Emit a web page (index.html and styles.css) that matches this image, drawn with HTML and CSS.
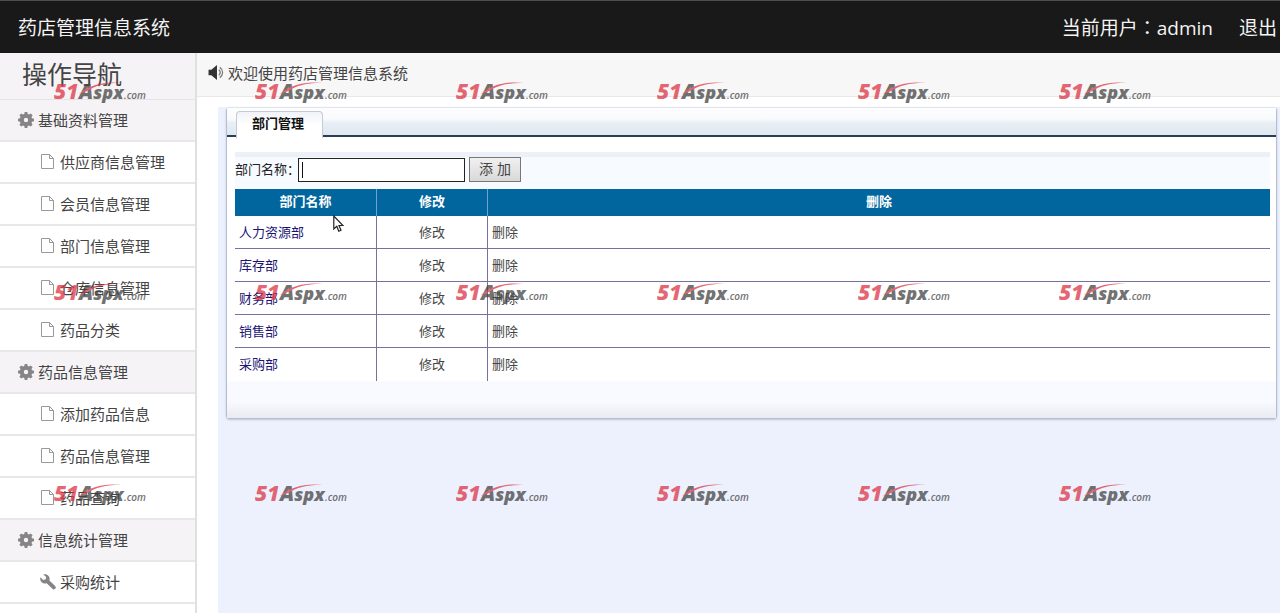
FILE: index.html
```html
<!DOCTYPE html>
<html lang="zh-CN">
<head>
<meta charset="utf-8">
<title>药店管理信息系统</title>
<link rel="stylesheet" href="styles.css">
</head>
<body>
<svg class="defs" aria-hidden="true">
  <symbol id="gear" viewBox="0 0 16 16"><path fill-rule="evenodd" d="M6.700 0h2.600l.4 2 1.300.5 1.700-1.100 1.900 1.900-1.100 1.700.5 1.300 2 .4v2.600l-2 .4-.5 1.300 1.100 1.700-1.900 1.900-1.700-1.100-1.300.5-.4 2H6.700l-.4-2-1.300-.5-1.700 1.100-1.900-1.900L2.500 11 2 9.700l-2-.4V6.700l2-.4L2.500 5 1.400 3.300l1.900-1.900L5 2.500 6.300 2zM8 5.800a2.200 2.200 0 1 0 0 4.400 2.200 2.200 0 0 0 0-4.400z"/></symbol>
  <symbol id="file" viewBox="0 0 16 16"><path d="M1.500.5h8l4 4v10h-12zM9.500.5v4h4" fill="none" stroke="currentColor"/></symbol>
  <symbol id="wrench" viewBox="0 0 16 16"><path d="M3.200.6a4.700 4.700 0 0 1 6.200 5.800l5.700 5.600a1.900 1.900 0 0 1-2.700 2.800L6.700 9.200A4.700 4.700 0 0 1 .5 3.300l2.700 2.600 2.500-.6.500-2.200z"/></symbol>
  <symbol id="mark" viewBox="0 0 96 24">
    <text x="0" y="19" class="mark-num">51</text>
    <text x="25" y="19" class="mark-name">A<tspan class="mark-small">spx</tspan></text>
    <text x="70" y="19" class="mark-com">.com</text>
    <path class="mark-arc" d="M25 14C37 4 52 1 68 3 54 2.500 42 5 33 11z"/>
  </symbol>
</svg>

<header class="topbar">
  <h1 class="brand">药店管理信息系统</h1>
  <div class="account"><span>当前用户<span class="colon" lang="zh-TW">：</span>admin</span><a href="#">退出</a></div>
</header>

<div class="layout">
  <nav class="sidebar">
    <h2 class="nav-title">操作导航</h2>
    <a class="group" href="#"><svg class="icon"><use href="#gear"/></svg>基础资料管理</a>
    <a class="item" href="#"><svg class="icon"><use href="#file"/></svg>供应商信息管理</a>
    <a class="item" href="#"><svg class="icon"><use href="#file"/></svg>会员信息管理</a>
    <a class="item" href="#"><svg class="icon"><use href="#file"/></svg>部门信息管理</a>
    <a class="item" href="#"><svg class="icon"><use href="#file"/></svg>仓库信息管理</a>
    <a class="item" href="#"><svg class="icon"><use href="#file"/></svg>药品分类</a>
    <a class="group" href="#"><svg class="icon"><use href="#gear"/></svg>药品信息管理</a>
    <a class="item" href="#"><svg class="icon"><use href="#file"/></svg>添加药品信息</a>
    <a class="item" href="#"><svg class="icon"><use href="#file"/></svg>药品信息管理</a>
    <a class="item" href="#"><svg class="icon"><use href="#file"/></svg>药品查询</a>
    <a class="group" href="#"><svg class="icon"><use href="#gear"/></svg>信息统计管理</a>
    <a class="item" href="#"><svg class="icon"><use href="#wrench"/></svg>采购统计</a>
  </nav>

  <main class="content">
    <div class="welcome">
      <svg class="speaker" viewBox="0 0 17 16"><path d="M0 5h3l6-5v16l-6-5H0z" fill="#333"/><path d="M11 5c2 2 2 4 0 6M12 2.500c4 3 4 8 0 11" fill="none" stroke="#777" stroke-width="1.300"/></svg>
      <span>欢迎使用药店管理信息系统</span>
    </div>
    <div class="workspace">
      <section class="panel">
        <div class="tabs"><button class="tab" type="button">部门管理</button></div>
        <div class="panel-body">
          <form class="add-form">
            <label for="dept">部门名称：</label>
            <span class="field"><input id="dept" type="text"><i class="caret"></i></span>
            <button class="add" type="button">添 加</button>
          </form>
          <table class="grid">
            <thead><tr><th class="col-name">部门名称</th><th class="col-edit">修改</th><th>删除</th></tr></thead>
            <tbody>
              <tr><td class="name">人力资源部</td><td class="edit"><a href="#">修改</a></td><td><a href="#">删除</a></td></tr>
              <tr><td class="name">库存部</td><td class="edit"><a href="#">修改</a></td><td><a href="#">删除</a></td></tr>
              <tr><td class="name">财务部</td><td class="edit"><a href="#">修改</a></td><td><a href="#">删除</a></td></tr>
              <tr><td class="name">销售部</td><td class="edit"><a href="#">修改</a></td><td><a href="#">删除</a></td></tr>
              <tr><td class="name">采购部</td><td class="edit"><a href="#">修改</a></td><td><a href="#">删除</a></td></tr>
            </tbody>
          </table>
        </div>
      </section>
    </div>
  </main>
</div>

<div class="marks">
  <svg><use href="#mark"/></svg><svg><use href="#mark"/></svg><svg><use href="#mark"/></svg><svg><use href="#mark"/></svg><svg><use href="#mark"/></svg><svg><use href="#mark"/></svg>
  <svg><use href="#mark"/></svg><svg><use href="#mark"/></svg><svg><use href="#mark"/></svg><svg><use href="#mark"/></svg><svg><use href="#mark"/></svg><svg><use href="#mark"/></svg>
  <svg><use href="#mark"/></svg><svg><use href="#mark"/></svg><svg><use href="#mark"/></svg><svg><use href="#mark"/></svg><svg><use href="#mark"/></svg><svg><use href="#mark"/></svg>
</div>
<svg class="pointer" viewBox="0 0 11 18"><path d="M.8 1v13l3-2.700 2 5 2.200-1-2-4.800h4z" fill="#fff" stroke="#222" stroke-width="1.200"/></svg>
</body>
</html>
```
FILE: styles.css
```css
* { box-sizing: border-box; }
body {
  margin: 0;
  height: 100vh;
  overflow: hidden;
  position: relative;
  display: flex;
  flex-direction: column;
  font-family: "Open Sans", "Noto Sans CJK SC", sans-serif;
  font-size: 15px;
  color: #444;
  background: #fff;
}
a { color: inherit; text-decoration: none; }
.defs { display: none; }

.topbar {
  flex: none;
  height: 53px;
  padding: 0 3px 0 18px;
  display: flex;
  align-items: center;
  justify-content: space-between;
  background: #191919;
  border-top: 1px solid #4c4f4f;
  color: #f4f4f4;
  font-size: 19px;
}
.brand { margin: 0; font-size: 19px; font-weight: 400; }
.account { display: flex; gap: 26px; }
.colon { font-family: "Noto Sans CJK TC", sans-serif; line-height: 1; }

.layout { flex: 1; min-height: 0; display: flex; }
.sidebar {
  flex: none;
  width: 197px;
  border-right: 2px solid #e0e0e2;
  overflow: hidden;
}
.nav-title {
  margin: 0;
  height: 47px;
  padding-left: 22px;
  line-height: 42px;
  font-size: 25px;
  font-weight: 400;
  color: #444;
  background: #f6f3f6;
  border-bottom: 1px solid #e6e4e7;
}
.group, .item {
  display: flex;
  align-items: center;
  height: 42px;
  padding-bottom: 1px;
  border-bottom: 2px solid #e8e8e9;
}
.group { padding-left: 18px; gap: 4px; background: #f6f3f6; }
.item { padding-left: 40px; gap: 4px; }
.icon { flex: none; width: 16px; height: 16px; fill: #858585; color: #999; }

.content { flex: 1; min-width: 0; display: flex; flex-direction: column; }
.welcome {
  flex: none;
  height: 44px;
  padding: 0 0 4px 11px;
  display: flex;
  align-items: center;
  gap: 3px;
  background: #f7f7f7;
  border-bottom: 1px solid #e8e8e8;
}
.speaker { width: 17px; height: 15px; }
.workspace {
  flex: 1;
  margin: 10px 0 0 21px;
  padding: 0 3px 0 8px;
  background: #edf1fe;
  font-family: "Liberation Sans", "Noto Sans CJK SC", sans-serif;
  font-size: 13px;
}
.panel {
  border: 1px solid #b3bfcf;
  border-top-color: #dfe3ea;
  border-radius: 4px;
  background: #fff;
  box-shadow: 0 1px 2px #bcc6d8;
}
.tabs {
  height: 29px;
  padding: 3px 0 0 9px;
  display: flex;
  background: linear-gradient(#fdfdff, #fafbfd 40%, #e8eff5 55%, #dfe8f0);
  border-bottom: 2px solid #283e58;
}
.tab {
  height: 27px;
  padding: 0 18px 6px 15px;
  border: 1px solid #c5cbd4;
  border-bottom: 0;
  border-radius: 4px 4px 0 0;
  background: linear-gradient(#f1f3f8, #fff 50%);
  font: bold 13px "Liberation Sans", "Noto Sans CJK SC", sans-serif;
  color: #111;
}
.panel-body {
  padding: 15px 6px 37px 8px;
  background: linear-gradient(to top, #e9ebf0, #f8faff 16px, #f8faff 36px, #fff 37px);
}
.add-form {
  height: 37px;
  padding-bottom: 7px;
  display: flex;
  align-items: center;
  border-top: 5px solid #ebf1f7;
  background: #f7faff;
  color: #222;
}
.add-form label { width: 63px; padding-bottom: 3px; white-space: nowrap; }
.field { position: relative; display: flex; margin-right: 4px; }
.field input { width: 167px; height: 24px; border: 1px solid #222; background: #fff; font-size: 13px; }
.caret { position: absolute; left: 4px; top: 4px; width: 1px; height: 16px; background: #111; }
.add {
  width: 52px;
  height: 25px;
  padding: 0 0 4px;
  border: 1px solid #777;
  background: linear-gradient(#f0f0f0, #d9d9d9);
  font: 14px "Liberation Sans", "Noto Sans CJK SC", sans-serif;
  color: #444;
}
.grid { width: 100%; table-layout: fixed; border-collapse: separate; border-spacing: 0; background: #fff; }
.col-name { width: 142px; }
.col-edit { width: 111px; }
.grid th {
  height: 27px;
  padding: 0 0 4px;
  background: #00669d;
  color: #fff;
  border-right: 1px solid #6fa3cc;
}
.grid td {
  height: 33px;
  padding: 0 4px 2px;
  border-right: 1px solid #76719f;
  border-bottom: 1px solid #76719f;
}
.grid th:last-child, .grid td:last-child { border-right: 0; }
.grid tr:last-child td { border-bottom: 0; }
.grid .name { color: #1b1473; }
.grid .edit { text-align: center; }

.marks {
  position: absolute;
  left: 54px;
  top: 80px;
  display: grid;
  grid-template-columns: repeat(5, 201px) 96px;
  row-gap: 177px;
  pointer-events: none;
  opacity: .75;
}
.marks svg { width: 96px; height: 24px; }
.mark-num, .mark-name { font: italic 800 21px "Open Sans", sans-serif; }
.mark-num { fill: #dc3545; }
.mark-name { fill: #444; }
.mark-small { font-size: 18px; }
.mark-com { font: italic 600 10px "Open Sans", sans-serif; fill: #444; }
.mark-arc { fill: #dc3545; }
.pointer { position: absolute; left: 333px; top: 215px; width: 11px; height: 18px; }
```
